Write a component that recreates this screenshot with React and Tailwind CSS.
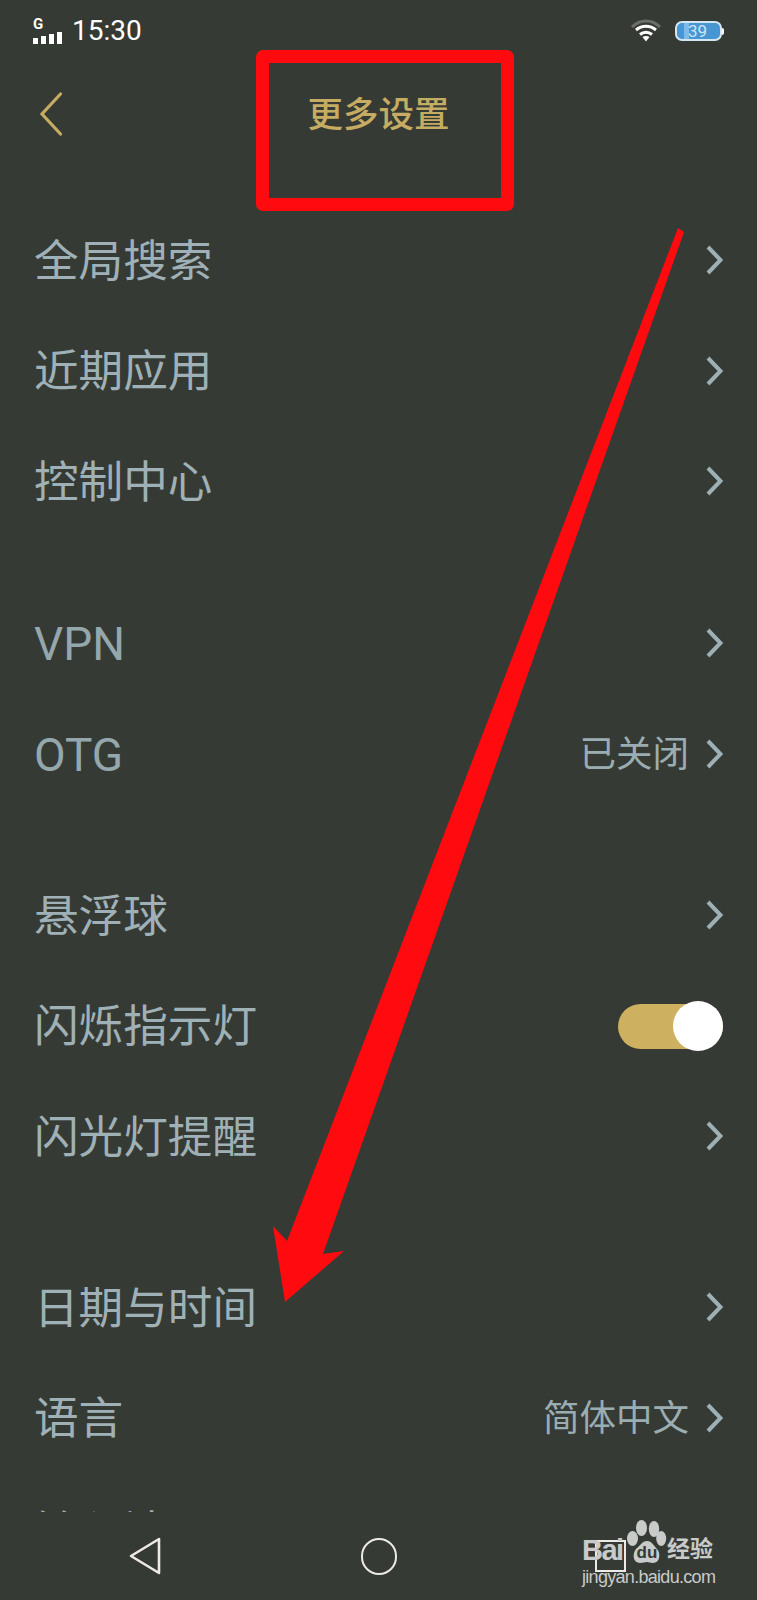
import React from "react";

function Chevron() {
  return (
    <svg width="17" height="30" viewBox="0 0 17 30" className="shrink-0 block">
      <path d="M2 2 L14.5 15 L2 28" fill="none" stroke="#9db0b5" strokeWidth="4" />
    </svg>
  );
}

function Row({ label, value, latin, toggle, cls }) {
  return (
    <div className={"h-[110.6px] flex items-center justify-between pl-[34px] pr-[34px] " + (cls || "")}>
      <span className={latin ? "pt-[3px] text-[46px] text-[#93a7ad]" : "pt-[4px] text-[44.6px] text-[#9fb1b6]"}>{label}</span>
      {toggle ? (
        <div className="w-[105px] h-[45px] mt-[1px] rounded-full bg-[#cdb060] flex items-center justify-end">
          <div className="w-[50px] h-[50px] shrink-0 rounded-full bg-white" />
        </div>
      ) : (
        <div className="flex items-center gap-[17px]">
          {value && <span className="pt-[4px] text-[36.5px] text-[#9aadb2]">{value}</span>}
          <Chevron />
        </div>
      )}
    </div>
  );
}

function StatusBar() {
  return (
    <div className="h-[60px] flex items-center justify-between pl-[33px] pr-[33px] pt-[2px]">
      <div className="flex items-end gap-[10px]">
        <div className="relative w-[29px] h-[24px] mb-[1px] flex items-end gap-[3px]">
          <span className="absolute left-0 top-[-3px] text-[15px] leading-[14px] font-bold text-white">G</span>
          <div className="w-[5px] h-[6px] bg-white" />
          <div className="w-[5px] h-[8px] bg-white" />
          <div className="w-[5px] h-[10px] bg-white" />
          <div className="w-[5px] h-[12px] bg-white" />
        </div>
        <span className="text-[28px] leading-[28px] text-white">15:30</span>
      </div>
      <div className="flex items-center gap-[13px]">
        <svg width="32" height="24" viewBox="0 0 32 24" className="block">
          <path d="M2 8 C10 0 22 0 30 8" fill="none" stroke="#6b6e69" strokeWidth="3" />
          <path d="M6 11 C12 6 20 6 26 11" fill="none" stroke="#ffffff" strokeWidth="3" />
          <path d="M10 15.5 C13.5 12.5 18.5 12.5 22 15.5" fill="none" stroke="#ffffff" strokeWidth="3" />
          <path d="M12.5 18 L16 22.5 L19.5 18 C17.5 16.6 14.5 16.6 12.5 18 Z" fill="#ffffff" />
        </svg>
        <div className="flex items-center">
          <div className="relative w-[47px] h-[20px] rounded-[7px] border-2 border-[#d4e6f2] bg-[#4596d2] flex items-center pl-[11px]">
            <div className="absolute left-[7px] top-0 bottom-0 w-[5px] bg-[#7dbcea]" />
            <span className="relative text-[17px] leading-[16px] text-[#cfe4f3]">39</span>
          </div>
          <div className="w-[2px] h-[7px] bg-white rounded-r-[2px]" />
        </div>
      </div>
    </div>
  );
}

function Header() {
  return (
    <div className="relative h-[145px] flex justify-center">
      <svg width="26" height="46" viewBox="0 0 26 46" className="absolute left-[38px] top-[31px] block">
        <path d="M22.5 3 L4 23 L22.5 43" fill="none" stroke="#c6ab63" strokeWidth="3.2" strokeLinecap="round" />
      </svg>
      <span className="pt-[31px] text-[35.5px] leading-[48px] font-medium text-[#c6ab63]">更多设置</span>
    </div>
  );
}

function NavBar() {
  return (
    <div className="h-[88px] flex items-center pl-[129px]">
      <svg width="32" height="38" viewBox="0 0 32 38" className="block shrink-0">
        <path d="M30 2 L30 36 L2 19 Z" fill="none" stroke="#ece9e6" strokeWidth="2.6" strokeLinejoin="round" />
      </svg>
      <div className="w-[36px] h-[37px] ml-[200px] rounded-full border-[2.5px] border-[#ece9e6] shrink-0" />
      <div className="w-[31px] h-[32px] ml-[198px] border-[2.5px] border-[#ece9e6] shrink-0" />
    </div>
  );
}

function Watermark() {
  return (
    <div className="absolute left-[582px] top-[1519px] w-[136px] flex flex-col text-[#c8cbc9]">
      <div className="h-[45px] flex items-end">
        <span className="w-[45px] text-[29px] leading-[28px] font-bold font-['Liberation_Sans',sans-serif] tracking-[-1.5px]">Bai</span>
        <svg width="40" height="44" viewBox="0 0 40 44" className="block shrink-0">
          <ellipse cx="5.5" cy="18.5" rx="5.5" ry="7.5" fill="#c8cbc9" />
          <ellipse cx="14.5" cy="8" rx="5.5" ry="8" fill="#c8cbc9" />
          <ellipse cx="27" cy="9" rx="5.2" ry="8" fill="#c8cbc9" />
          <ellipse cx="34.2" cy="18.5" rx="5" ry="7.5" fill="#c8cbc9" />
          <path d="M20 21 C25 21 27 26 30 29 C34 33 33 43 26 43 C23 43 22 42 20 42 C18 42 16 43 13 43 C6 43 5 34 9 29 C13 26 15 21 20 21 Z" fill="#c8cbc9" />
          <text x="20" y="38" textAnchor="middle" fontSize="17" fontWeight="700" fontFamily="Liberation Sans" fill="#363a34">du</text>
        </svg>
        <span className="text-[23px] leading-[28px] font-bold">经验</span>
      </div>
      <span className="mt-[3px] text-[18px] leading-[20px] tracking-[-0.7px] font-['Liberation_Sans',sans-serif] whitespace-nowrap">jingyan.baidu.com</span>
    </div>
  );
}

export default function App() {
  return (
    <div className="relative w-[757px] h-[1600px] overflow-hidden bg-[#363a34] flex flex-col font-['Roboto','Noto_Sans_CJK_SC',sans-serif]">
      <StatusBar />
      <Header />
      <div className="h-[1307px] overflow-hidden">
        <Row label="全局搜索" />
        <Row label="近期应用" />
        <Row label="控制中心" />
        <Row label="VPN" latin cls="mt-[51px]" />
        <Row label="OTG" latin value="已关闭" />
        <Row label="悬浮球" cls="mt-[51px]" />
        <Row label="闪烁指示灯" toggle />
        <Row label="闪光灯提醒" />
        <Row label="日期与时间" cls="mt-[60px]" />
        <Row label="语言" value="简体中文" />
        <Row label="输入法" cls="mt-[3px]" />
      </div>
      <NavBar />

      {/* red annotations over the page */}
      <div className="absolute left-[256px] top-[50px] w-[258px] h-[161px] border-[13px] border-[#ff0a0f] rounded-[7px]" />
      <svg width="757" height="1600" viewBox="0 0 757 1600" className="absolute left-0 top-0 pointer-events-none">
        <polygon points="678,228 684,232 323,1254 344,1251 285,1302 273,1226 287,1241" fill="#ff0a0f" />
      </svg>
      <Watermark />
    </div>
  );
}
